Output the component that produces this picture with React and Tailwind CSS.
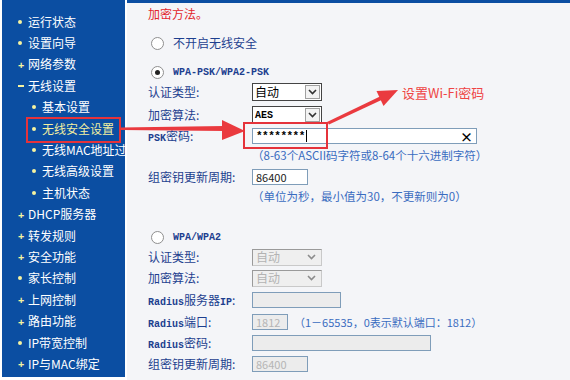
import React from 'react';

const CN = { fontFamily: '"Noto Sans CJK SC", "Noto Sans", sans-serif' };
const MONO = { fontFamily: '"Liberation Mono", "Noto Sans CJK SC", monospace' };

const menu = [
  { label: '运行状态', mark: 'dot' },
  { label: '设置向导', mark: 'dot' },
  { label: '网络参数', mark: 'plus' },
  { label: '无线设置', mark: 'minus' },
  { label: '基本设置', mark: 'dot', sub: true },
  { label: '无线安全设置', mark: 'dot', sub: true, active: true },
  { label: '无线MAC地址过滤', mark: 'dot', sub: true },
  { label: '无线高级设置', mark: 'dot', sub: true },
  { label: '主机状态', mark: 'dot', sub: true },
  { label: 'DHCP服务器', mark: 'plus' },
  { label: '转发规则', mark: 'plus' },
  { label: '安全功能', mark: 'plus' },
  { label: '家长控制', mark: 'dot' },
  { label: '上网控制', mark: 'plus' },
  { label: '路由功能', mark: 'plus' },
  { label: 'IP带宽控制', mark: 'dot' },
  { label: 'IP与MAC绑定', mark: 'plus' },
];

const Mark = ({ type }) => {
  if (type === 'plus') return <span className="text-[#f6f3a0] text-[11px] font-bold leading-none">+</span>;
  if (type === 'minus') return <span className="block w-[6px] h-[2px] bg-[#f6f3a0]" />;
  return <span className="block w-[4px] h-[4px] rounded-full bg-[#f6f3a0]" />;
};

const Chevron = ({ color }) => (
  <svg width="9" height="6" viewBox="0 0 9 6">
    <path d="M1 1 L4.5 4.5 L8 1" fill="none" stroke={color} strokeWidth="1.6" />
  </svg>
);

const Select = ({ value, disabled, mono }) =>
  disabled ? (
    <div className="w-[70px] h-[17px] border border-[#c9c9c9] border-t-[#9a9a9a] border-l-[#9a9a9a] bg-[#efefef] flex items-center justify-between pl-[3px] pr-[5px]">
      <span className="text-[12px] text-[#b3b3b3]" style={CN}>{value}</span>
      <Chevron color="#8c8c8c" />
    </div>
  ) : (
    <div className="w-[70px] h-[18px] border border-[#444] bg-white flex items-center justify-between pl-[2px] pr-[1px]">
      <span className={mono ? 'text-[10px] font-bold text-black' : 'text-[12px] text-black'} style={mono ? MONO : CN}>{value}</span>
      <span className="w-[15px] h-[14px] border border-[#a0a0a0] bg-[#f3f3f3] flex items-center justify-center">
        <Chevron color="#333" />
      </span>
    </div>
  );

const Input = ({ w, value, disabled }) => (
  <div
    className={`h-[16px] border border-[#7f9db9] flex items-center px-[3px] ${disabled ? 'bg-[#ececec]' : 'bg-white'}`}
    style={{ width: w }}
  >
    <span className={`text-[11px] ${disabled ? 'text-[#b5b5b5]' : 'text-[#222]'}`} style={CN}>{value}</span>
  </div>
);

const Radio = ({ checked }) => (
  <span className="w-[13px] h-[13px] rounded-full border border-[#8f8f8f] bg-white flex items-center justify-center">
    {checked && <span className="w-[5px] h-[5px] rounded-full bg-[#222]" />}
  </span>
);

const Label = ({ children }) => (
  <span className="w-[104px] shrink-0 text-[12px] text-[#1d3f8f] whitespace-nowrap" style={CN}>
    {children}
  </span>
);

const Row = ({ className = '', children }) => (
  <div className={`h-[20px] flex items-center ${className}`}>{children}</div>
);

const Rad = ({ children }) => (
  <span className="text-[10px] font-bold text-[#1d3f8f]" style={MONO}>{children}</span>
);

export default function App() {
  return (
    <div className="relative w-[570px] h-[380px] bg-white overflow-hidden flex">
      {/* sidebar */}
      <div className="ml-[2px] w-[123px] shrink-0 h-[377px] bg-[#0b4ea2] pt-[11px] overflow-hidden">
        {menu.map((m) => (
          <div
            key={m.label}
            className={`h-[21.4px] flex items-center whitespace-nowrap ${m.sub ? 'pl-[30px]' : 'pl-[16px]'}`}
          >
            <span className="w-[10px] shrink-0 flex items-center">
              <Mark type={m.mark} />
            </span>
            <span className={`text-[12px] ${m.active ? 'text-[#f2eea0]' : 'text-white'}`} style={CN}>
              {m.label}
            </span>
          </div>
        ))}
      </div>

      {/* main */}
      <div className="flex-1 h-full border-l-2 border-white bg-[#f4f5f8]">
        <div className="h-[3px] bg-[#0b4ea2]" />
        <div className="pl-[21px]">
          <Row className="h-[22px]">
            <span className="text-[12px] text-[#e3262c]" style={CN}>加密方法。</span>
          </Row>

          <Row className="mt-[8px] pl-[3px]">
            <Radio />
            <span className="ml-[9px] text-[12px] text-[#1d3f8f]" style={CN}>不开启无线安全</span>
          </Row>

          <Row className="mt-[9px] pl-[3px]">
            <Radio checked />
            <span className="ml-[9px] text-[10px] font-bold text-[#1d3f8f]" style={MONO}>WPA-PSK/WPA2-PSK</span>
          </Row>
          <Row>
            <Label>认证类型:</Label>
            <Select value="自动" />
          </Row>
          <Row className="mt-[3px]">
            <Label>加密算法:</Label>
            <Select value="AES" mono />
          </Row>
          <Row className="mt-[1px]">
            <Label><span className="text-[10px] font-bold" style={MONO}>PSK</span>密码:</Label>
            <div className="w-[225px] h-[16px] border border-[#7f9db9] bg-white flex items-center justify-between px-[3px]">
              <span className="flex items-center">
                <span className="text-[11px] font-bold text-black tracking-[-0.5px]" style={MONO}>********</span>
                <span className="w-[1px] h-[12px] bg-black ml-[1px]" />
              </span>
              <span className="text-[13px] font-bold text-black leading-none" style={CN}>×</span>
            </div>
          </Row>
          <Row className="pl-[104px]">
            <span className="text-[11.5px] text-[#3a6cc0] whitespace-nowrap" style={CN}>（8-63个ASCII码字符或8-64个十六进制字符）</span>
          </Row>
          <Row className="mt-[1px]">
            <Label>组密钥更新周期:</Label>
            <Input w={56} value="86400" />
          </Row>
          <Row className="pl-[104px]">
            <span className="text-[11.5px] text-[#3a6cc0] whitespace-nowrap" style={CN}>（单位为秒，最小值为30，不更新则为0）</span>
          </Row>

          <Row className="mt-[20px] pl-[3px]">
            <Radio />
            <span className="ml-[9px] text-[10px] font-bold text-[#1d3f8f]" style={MONO}>WPA/WPA2</span>
          </Row>
          <Row>
            <Label>认证类型:</Label>
            <Select value="自动" disabled />
          </Row>
          <Row className="mt-[1px]">
            <Label>加密算法:</Label>
            <Select value="自动" disabled />
          </Row>
          <Row className="mt-[2px]">
            <Label><Rad>Radius</Rad>服务器<Rad>IP</Rad>:</Label>
            <Input w={89} value="" disabled />
          </Row>
          <Row className="mt-[2px]">
            <Label><Rad>Radius</Rad>端口:</Label>
            <Input w={36} value="1812" disabled />
            <span className="ml-[6px] text-[11px] text-[#3a6cc0] whitespace-nowrap" style={CN}>（1－65535，0表示默认端口：1812）</span>
          </Row>
          <Row className="mt-[1px]">
            <Label><Rad>Radius</Rad>密码:</Label>
            <Input w={179} value="" disabled />
          </Row>
          <Row className="mt-[1px]">
            <Label>组密钥更新周期:</Label>
            <Input w={56} value="86400" disabled />
          </Row>
        </div>
      </div>

      {/* annotations */}
      <div className="absolute left-[26px] top-[117px] w-[95px] h-[26px] border-2 border-[#e5333b]" />
      <div className="absolute left-[243px] top-[122px] w-[85px] h-[27px] border-2 border-[#e5333b]" />
      <svg className="absolute left-0 top-0 pointer-events-none" width="570" height="380" viewBox="0 0 570 380">
        <polygon points="121,127.5 224,126 224,131 121,130" fill="#ea3a3f" />
        <polygon points="222,120 245,131 222,140" fill="#ea3a3f" />
        <polygon points="327,122 380,96.5 381.5,100 329,124.5" fill="#ea3a3f" />
        <polygon points="376.5,91 398,90 383.5,106" fill="#ea3a3f" />
      </svg>
      <span className="absolute left-[402px] top-[83px] text-[13px] text-[#ef4444] whitespace-nowrap" style={CN}>
        设置Wi-Fi密码
      </span>
    </div>
  );
}
